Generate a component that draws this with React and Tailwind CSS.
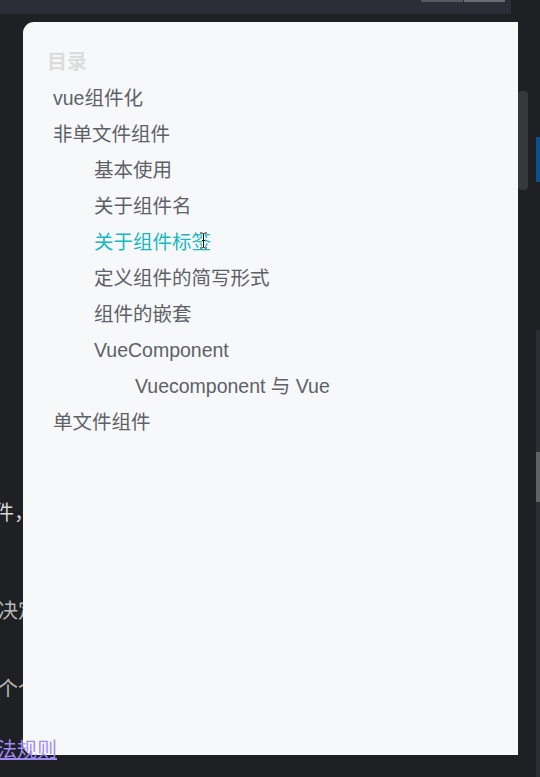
import React from "react";

const items = [
  { t: "vue组件化", l: 0 },
  { t: "非单文件组件", l: 0 },
  { t: "基本使用", l: 1 },
  { t: "关于组件名", l: 1 },
  { t: "关于组件标签", l: 1, active: true },
  { t: "定义组件的简写形式", l: 1 },
  { t: "组件的嵌套", l: 1 },
  { t: "VueComponent", l: 1 },
  { t: "Vuecomponent 与 Vue", l: 2 },
  { t: "单文件组件", l: 0 },
];

const pad = ["pl-[6px]", "pl-[47px]", "pl-[88px]"];

export default function App() {
  return (
    <div
      className="relative w-[540px] h-[777px] overflow-hidden bg-[#1e2023]"
      style={{ fontFamily: '"Liberation Sans", "Noto Sans CJK SC", sans-serif' }}
    >
      {/* top bar */}
      <div className="flex h-[14px]">
        <div className="relative w-[511px] h-full bg-[#2b2e36]">
          <div className="absolute left-[421px] top-0 w-[84px] h-[2px] flex gap-[1px]">
            <div className="w-[42px] h-full bg-[#55585e]" />
            <div className="flex-1 h-full bg-[#6a6d72]" />
          </div>
        </div>
        <div className="flex-1 bg-[#1e2124]" />
      </div>

      {/* background page text (partly hidden behind the panel) */}
      <div className="flex flex-col text-[20px] leading-[24px] whitespace-nowrap">
        <div className="mt-[487px] -ml-[6px] text-[#d8d8d8]">件，</div>
        <div className="mt-[74px] -ml-[2px] text-[#b8b8b8]">决定</div>
        <div className="mt-[54px] -ml-[2px] text-[#b8b8b8]">个个</div>
        <div className="relative z-10 mt-[37px] -ml-[3px] w-[65px] overflow-hidden text-[#a08cf7] underline">
          法规则
        </div>
      </div>

      {/* right strip */}
      <div className="absolute right-0 top-[14px] w-[4px] h-[763px] flex flex-col">
        <div className="h-[123px]" />
        <div className="h-[45px] bg-[#0f4f8c]" />
        <div className="h-[148px]" />
        <div className="flex-1 bg-[#2b2e35] flex flex-col">
          <div className="h-[122px]" />
          <div className="h-[50px] bg-[#5f6163]" />
        </div>
      </div>

      {/* scrollbar thumb */}
      <div className="absolute left-[518px] top-[91px] w-[10px] h-[99px] rounded-[4px] bg-[#36383c]" />

      {/* TOC panel */}
      <div className="absolute left-[23px] top-[22px] w-[495px] h-[733px] rounded-l-[11px] bg-[#f7f8f9] pt-[22px] pl-[24px]">
        <div className="text-[20px] leading-[36px] font-bold text-[#dcdcdc]">目录</div>
        <ul className="flex flex-col">
          {items.map((it, i) => (
            <li
              key={i}
              className={`${pad[it.l]} h-[36px] flex items-center text-[19.5px] leading-[24px] whitespace-nowrap ${
                it.active ? "text-[#19b9c1]" : "text-[#5d6168]"
              }`}
            >
              {it.t}
            </li>
          ))}
        </ul>
      </div>

      {/* I-beam cursor */}
      <svg
        className="absolute left-[199px] top-[232px]"
        width="9"
        height="17"
        viewBox="0 0 9 17"
      >
        <path
          d="M1 1h2.5l1 1 1-1H8M4.5 2v13M1 16h2.5l1-1 1 1H8M3 8.5h3"
          stroke="#fff"
          strokeWidth="2.6"
          fill="none"
        />
        <path
          d="M1 1h2.5l1 1 1-1H8M4.5 2v13M1 16h2.5l1-1 1 1H8M3 8.5h3"
          stroke="#111"
          strokeWidth="1"
          fill="none"
        />
      </svg>
    </div>
  );
}
